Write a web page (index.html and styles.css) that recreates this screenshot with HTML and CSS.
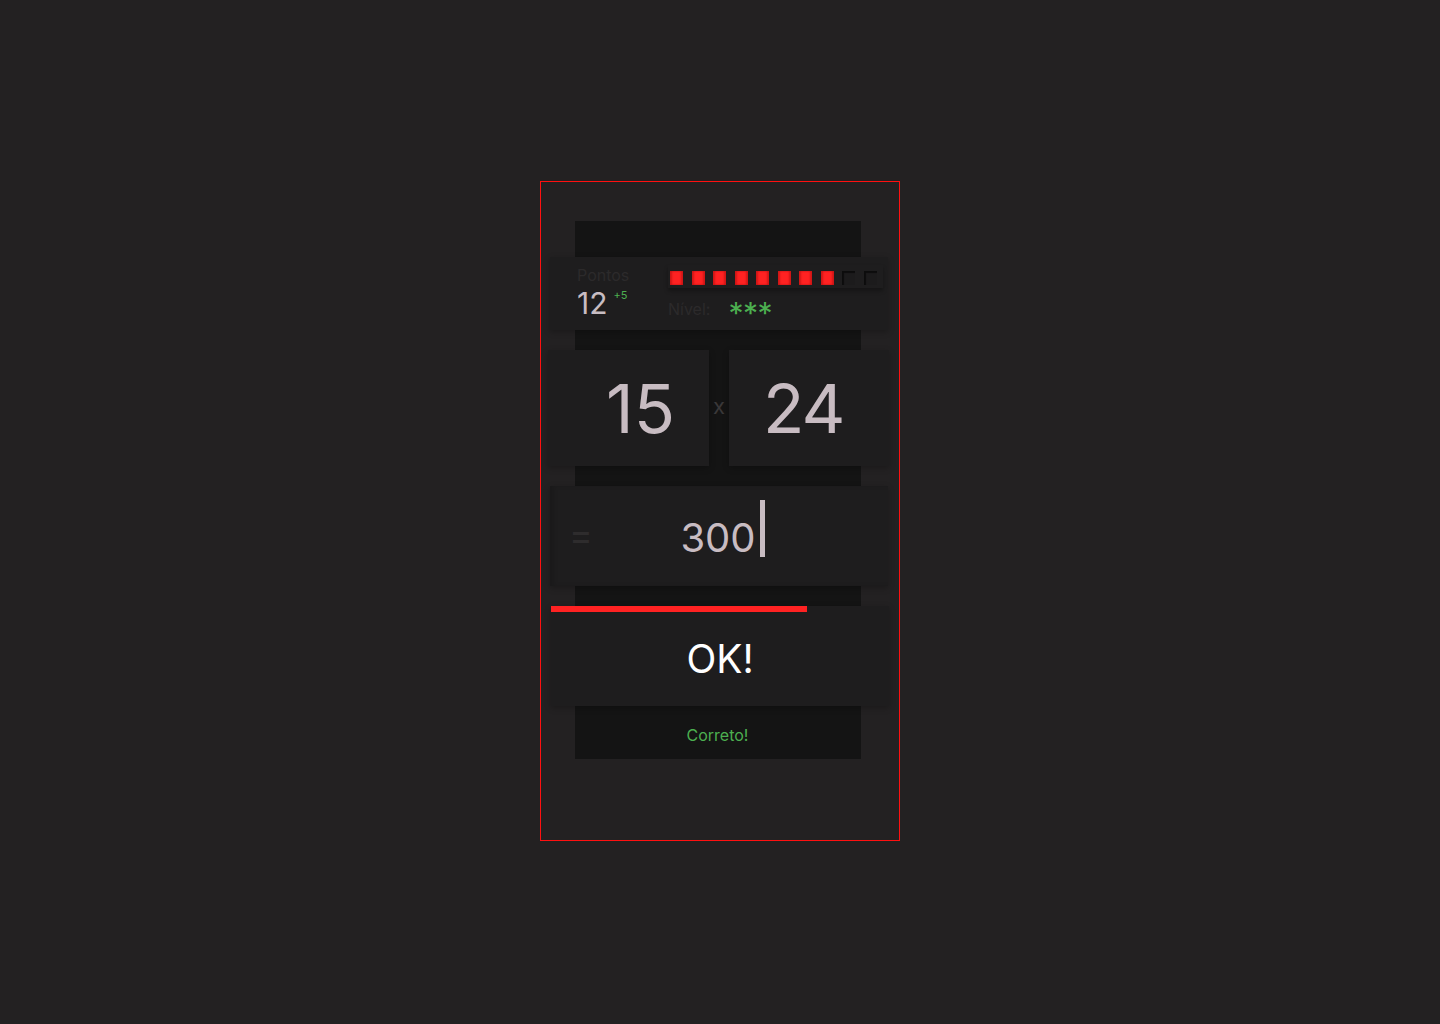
FILE: index.html
```html
<!DOCTYPE html>
<html lang="pt">
<head>
<meta charset="utf-8">
<title>Tabuada</title>
<link rel="stylesheet" href="styles.css">
</head>
<body>
<div class="frame">
  <div class="column">
    <div class="card score">
      <div class="points">
        <div class="label">Pontos</div>
        <div class="value">12<sup class="bonus">+5</sup></div>
      </div>
      <div class="level">
        <div class="squares">
          <span class="sq on"></span><span class="sq on"></span><span class="sq on"></span><span class="sq on"></span><span class="sq on"></span><span class="sq on"></span><span class="sq on"></span><span class="sq on"></span><span class="sq"></span><span class="sq"></span>
        </div>
        <div class="level-row">
          <span class="label">Nível:</span>
          <span class="stars">***</span>
        </div>
      </div>
    </div>
    <div class="operands">
      <div class="card num left">15</div>
      <div class="times">x</div>
      <div class="card num right">24</div>
    </div>
    <div class="card answer">
      <span class="equals">=</span>
      <span class="result">300<span class="caret"></span></span>
    </div>
    <div class="card button">
      <div class="timer"></div>
      <div class="ok">OK!</div>
    </div>
    <div class="feedback">Correto!</div>
  </div>
</div>
</body>
</html>
```
FILE: styles.css
```css
html, body {
  margin: 0;
  padding: 0;
}
body {
  background: #232122;
  font-family: Inter, "Noto Sans", sans-serif;
  min-height: 1024px;
}
.frame {
  box-sizing: border-box;
  width: 360px;
  height: 660px;
  margin: 181px auto 0;
  border: 1px solid #ff1010;
  padding: 39px 0 0 34px;
}
.column {
  width: 286px;
  background: #141414;
  padding-top: 36px;
  display: flex;
  flex-direction: column;
}
.card {
  background: #1e1d1e;
  box-shadow: 0 2px 6px rgba(0, 0, 0, 0.25);
}
.score {
  margin-left: -25px;
  width: 338px;
  height: 73px;
  box-sizing: border-box;
  padding: 8px 0 0 27px;
  display: flex;
}
.label {
  color: #2c2a2b;
  font-size: 16px;
  line-height: 20px;
}
.points {
  width: 91px;
}
.value {
  color: #c8bdc3;
  font-size: 30px;
  line-height: 36px;
}
.bonus {
  color: #4caf50;
  font-size: 11px;
  line-height: 12px;
  vertical-align: top;
  position: relative;
  top: 4px;
  margin-left: 6px;
}
.level {
  display: flex;
  flex-direction: column;
}
.squares {
  display: flex;
  gap: 8.5px;
  padding: 6px 6px 3px 2px;
  box-shadow: 0 3px 4px rgba(0, 0, 0, 0.3);
  width: max-content;
}
.sq {
  width: 13px;
  height: 14px;
  background: #1c1b1c;
  box-shadow: inset 2px 2px 1px rgba(0, 0, 0, 0.55);
}
.sq.on {
  background: #ff2222;
  box-shadow: inset 2px 0 2px rgba(120, 0, 0, 0.35), inset -2px 0 2px rgba(120, 0, 0, 0.35);
}
.level-row {
  display: flex;
  align-items: center;
  margin-top: 11px;
}
.stars {
  color: #4caf50;
  font-size: 30px;
  line-height: 20px;
  height: 20px;
  margin-left: 18px;
  letter-spacing: -0.5px;
  position: relative;
  top: 4px;
}
.operands {
  display: flex;
  margin-top: 20px;
  margin-left: -27px;
  width: 341px;
  height: 116px;
}
.num {
  color: #c8bcc2;
  font-size: 68px;
  display: flex;
  align-items: center;
  box-sizing: border-box;
}
.num.left {
  width: 161px;
  justify-content: flex-end;
  padding-right: 34px;
}
.num.right {
  width: 160px;
  justify-content: flex-start;
  padding-left: 34px;
  letter-spacing: -2px;
}
.times {
  width: 20px;
  color: #3a3839;
  font-size: 22px;
  display: flex;
  align-items: center;
  justify-content: center;
  padding-bottom: 4px;
}
.answer {
  margin-top: 20px;
  margin-left: -25px;
  width: 338px;
  height: 100px;
  position: relative;
  display: flex;
  align-items: center;
  justify-content: center;
  box-shadow: inset 4px 0 4px rgba(0, 0, 0, 0.12), 0 2px 6px rgba(0, 0, 0, 0.25);
}
.equals {
  position: absolute;
  left: 19px;
  top: 27px;
  color: #2e2c2d;
  font-size: 36px;
}
.result {
  color: #c8bcc2;
  font-size: 40px;
  position: relative;
  top: 1px;
  left: -1px;
}
.caret {
  position: absolute;
  right: -9px;
  top: -13px;
  width: 5px;
  height: 57px;
  background: #c8bcc2;
}
.button {
  margin-top: 20px;
  margin-left: -24px;
  width: 338px;
  height: 100px;
  display: flex;
  flex-direction: column;
}
.timer {
  width: 256px;
  height: 6px;
  background: #ff2222;
}
.ok {
  flex: 1;
  display: flex;
  align-items: center;
  justify-content: center;
  color: #ffffff;
  font-size: 39px;
  padding-bottom: 2px;
}
.feedback {
  height: 53px;
  box-sizing: border-box;
  padding-top: 4px;
  display: flex;
  align-items: center;
  justify-content: center;
  color: #4caf50;
  font-size: 16px;
  padding-right: 1px;
}
```
